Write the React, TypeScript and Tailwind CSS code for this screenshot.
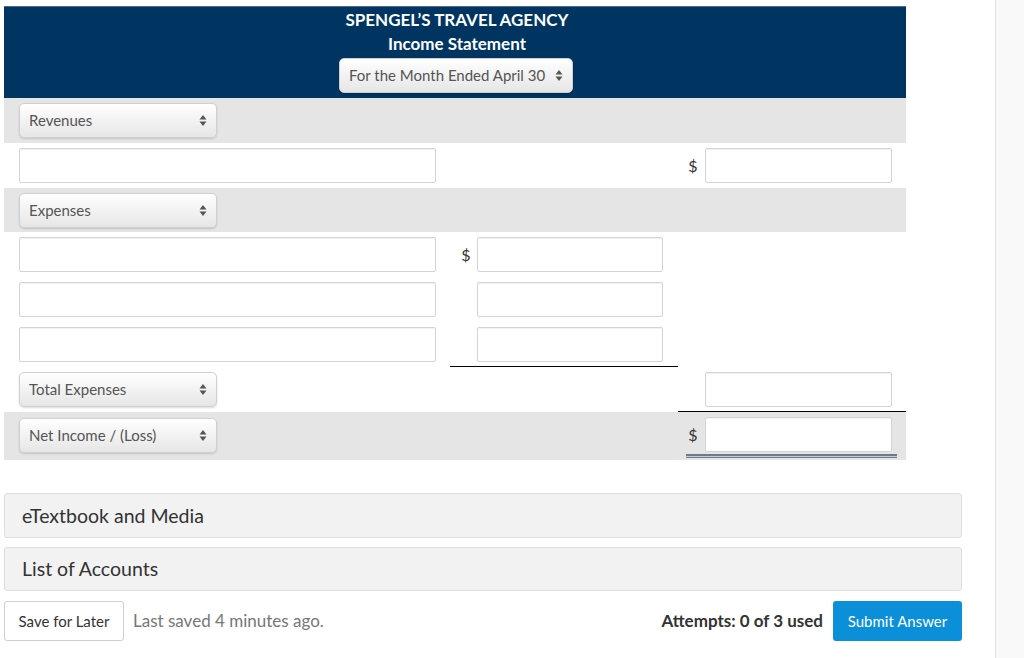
import React from "react";

const Arrows = () => (
  <svg width="8" height="13" viewBox="0 0 8 13" className="shrink-0">
    <path d="M4 1 L7.5 5.5 L0.5 5.5 Z" fill="#555" />
    <path d="M4 12 L7.5 7.5 L0.5 7.5 Z" fill="#555" />
  </svg>
);

const Sel = ({ label, w }: { label: string; w: string }) => (
  <div
    className={`${w} h-[35px] flex items-center justify-between pl-[9px] pr-[9px] rounded-[5px] border border-[#d0d0d0] bg-gradient-to-b from-white to-[#e6e6e6] shadow-[0_1px_2px_rgba(0,0,0,0.15)] text-[15px] text-[#555]`}
  >
    <span>{label}</span>
    <Arrows />
  </div>
);

const Inp = ({ w }: { w: string }) => (
  <div className={`${w} h-[35px] bg-white border border-[#d4d4d4] rounded-[2px] shadow-[inset_0_1px_1px_rgba(0,0,0,0.06)]`} />
);

const Dollar = () => <span className="text-[16px] text-[#333] w-[20px] text-center">$</span>;

export default function App() {
  return (
    <div className="w-[1024px] h-[658px] flex bg-white overflow-hidden" style={{ fontFamily: "Lato, 'Open Sans', sans-serif" }}>
      <div className="w-[995px] pl-[4px] pt-[6px] shrink-0">
        <div className="w-[902px]">
          {/* header */}
          <div className="h-[92px] bg-[#003461] border-t border-[#4a6d8f] flex flex-col items-center">
            <div className="ml-[4px] flex flex-col items-center">
              <div className="text-white font-bold text-[17px] mt-[1px] leading-[24px]">SPENGEL’S TRAVEL AGENCY</div>
              <div className="text-white font-bold text-[17px] leading-[24px]">Income Statement</div>
              <div className="mt-[2px] -ml-[2px]">
                <Sel label="For the Month Ended April 30" w="w-[234px]" />
              </div>
            </div>
          </div>
          {/* Revenues */}
          <div className="h-[45px] bg-[#e5e5e5] flex items-center pl-[15px]">
            <Sel label="Revenues" w="w-[198px]" />
          </div>
          <div className="h-[45px] flex items-center">
            <div className="w-[446px] pl-[15px]"><Inp w="w-[417px]" /></div>
            <div className="w-[228px]" />
            <div className="w-[228px] flex items-center pl-[0px]">
              <div className="w-[27px] flex justify-end pr-[2px]"><Dollar /></div>
              <Inp w="w-[187px]" />
            </div>
          </div>
          {/* Expenses */}
          <div className="h-[44px] bg-[#e5e5e5] flex items-center pl-[15px]">
            <Sel label="Expenses" w="w-[198px]" />
          </div>
          {[0, 1, 2].map((i) => (
            <div key={i} className="h-[45px] flex items-center">
              <div className="w-[446px] pl-[15px]"><Inp w="w-[417px]" /></div>
              <div className={`w-[228px] h-full flex items-center ${i === 2 ? "border-b border-black" : ""}`}>
                <div className="w-[27px] flex justify-end pr-[1px]">{i === 0 ? <Dollar /> : null}</div>
                <Inp w="w-[186px]" />
              </div>
            </div>
          ))}
          {/* Total */}
          <div className="h-[45px] flex items-center">
            <div className="w-[446px] pl-[15px]"><Sel label="Total Expenses" w="w-[198px]" /></div>
            <div className="w-[228px]" />
            <div className="w-[228px] h-full flex items-center border-b border-black">
              <div className="w-[27px]" />
              <Inp w="w-[187px]" />
            </div>
          </div>
          {/* Net */}
          <div className="h-[48px] bg-[#e5e5e5] flex">
            <div className="w-[446px] pl-[15px] pt-[6px]"><Sel label="Net Income / (Loss)" w="w-[198px]" /></div>
            <div className="w-[228px]" />
            <div className="w-[228px] pt-[5px]">
              <div className="flex items-center">
                <div className="w-[27px] flex justify-end pr-[2px]"><Dollar /></div>
                <Inp w="w-[187px]" />
              </div>
              <div className="ml-[8px] w-[211px] mt-[2px] h-[4px] border-t-2 border-b border-[#6b7b88] bg-[#c7cdd2]" />
            </div>
          </div>
        </div>
        {/* accordions */}
        <div className="w-[958px] mt-[33px] flex flex-col gap-[9px]">
          <div className="h-[45px] bg-[#f2f2f2] border border-[#dedede] rounded-[3px] flex items-center pl-[17px] text-[19.5px] text-[#333]">eTextbook and Media</div>
          <div className="h-[44px] bg-[#f2f2f2] border border-[#dedede] rounded-[3px] flex items-center pl-[17px] text-[19.5px] text-[#333]">List of Accounts</div>
        </div>
        <div className="w-[958px] mt-[10px] flex items-center">
          <div className="h-[40px] w-[120px] border border-[#cfcfcf] rounded-[3px] flex items-center justify-center text-[15px] text-[#333]">Save for Later</div>
          <div className="ml-[9px] text-[17px] text-[#777]">Last saved 4 minutes ago.</div>
          <div className="ml-auto text-[17px] font-bold text-[#333]">Attempts: 0 of 3 used</div>
          <div className="ml-[10px] h-[40px] w-[129px] bg-[#0b8fd9] rounded-[3px] flex items-center justify-center text-[15px] text-white">Submit Answer</div>
        </div>
      </div>
      <div className="flex-1 border-l border-[#e0e0e0] bg-[#f9f9f9]" />
    </div>
  );
}
